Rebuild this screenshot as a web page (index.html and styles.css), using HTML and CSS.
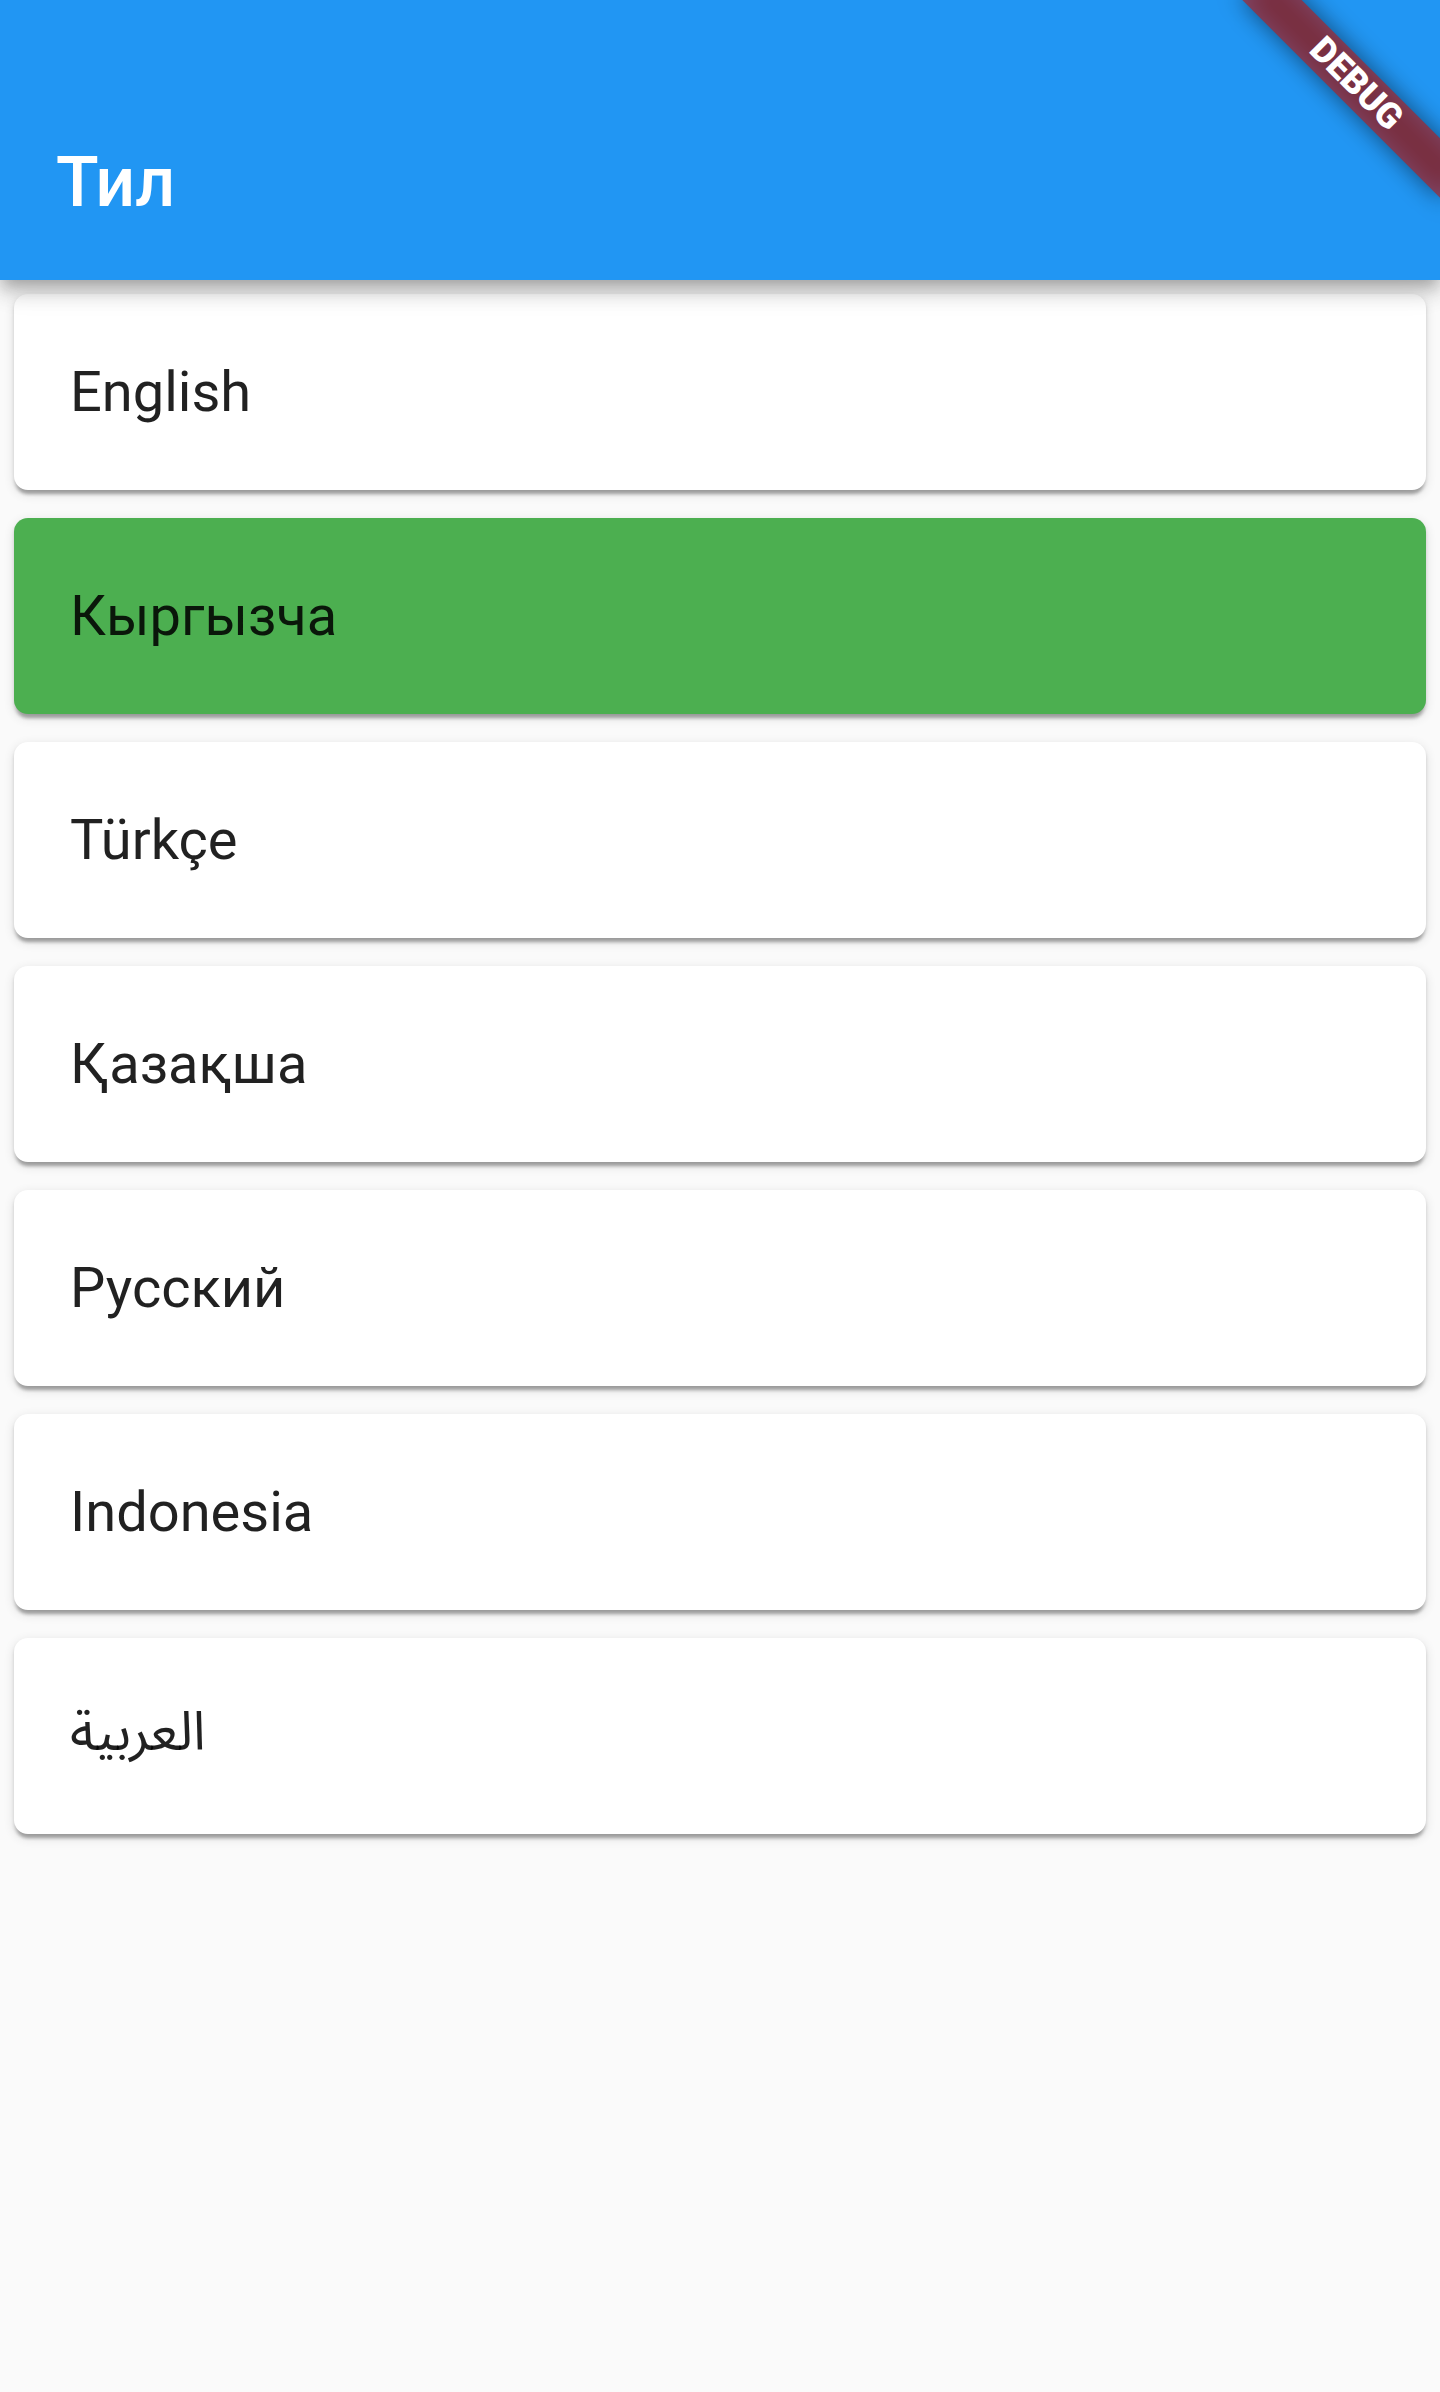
FILE: index.html
```html
<!DOCTYPE html>
<html lang="ky">
<head>
<meta charset="utf-8">
<title>Тил</title>
<link rel="stylesheet" href="styles.css">
</head>
<body>
<div class="screen">
  <header class="appbar">
    <div class="toolbar">
      <h1 class="title">Тил</h1>
    </div>
  </header>
  <main class="list">
    <div class="card"><span class="label">English</span></div>
    <div class="card card-selected"><span class="label">Кыргызча</span></div>
    <div class="card"><span class="label">Türkçe</span></div>
    <div class="card"><span class="label">Қазақша</span></div>
    <div class="card"><span class="label">Русский</span></div>
    <div class="card"><span class="label">Indonesia</span></div>
    <div class="card"><span class="label label-ar">العربية</span></div>
  </main>
  <div class="debug-banner"><span class="debug-text">DEBUG</span></div>
</div>
</body>
</html>
```
FILE: styles.css
```css
html, body {
  margin: 0;
  padding: 0;
}
body {
  background: #fafafa;
  font-family: Roboto, "Noto Sans", "DejaVu Sans", sans-serif;
}
.screen {
  position: relative;
  width: 1440px;
  height: 2392px;
  overflow: hidden;
  background: #fafafa;
}
.appbar {
  position: relative;
  z-index: 2;
  height: 280px;
  background: #2196f3;
  display: flex;
  flex-direction: column;
  justify-content: flex-end;
  box-shadow: 0 7px 14px -3.5px rgba(0,0,0,0.2), 0 14px 17.5px 0 rgba(0,0,0,0.14), 0 3.5px 35px 0 rgba(0,0,0,0.12);
}
.toolbar {
  height: 196px;
  display: flex;
  align-items: center;
  padding-left: 56px;
}
.title {
  margin: 0;
  font-size: 70px;
  font-weight: 500;
  color: #ffffff;
  line-height: normal;
}
.list {
  display: flex;
  flex-direction: column;
  gap: 28px;
  padding: 14px;
}
.card {
  height: 196px;
  background: #ffffff;
  border-radius: 14px;
  display: flex;
  align-items: center;
  padding: 0 56px;
  box-shadow: 0 7px 3.5px -3.5px rgba(0,0,0,0.2), 0 3.5px 3.5px 0 rgba(0,0,0,0.14), 0 3.5px 10.5px 0 rgba(0,0,0,0.12);
}
.card-selected {
  background: #4caf50;
}
.label {
  font-size: 56px;
  font-weight: 400;
  color: rgba(0,0,0,0.87);
  line-height: normal;
}
.label-ar {
  font-family: "Noto Sans Arabic", "Noto Naskh Arabic", "DejaVu Sans", sans-serif;
  font-size: 54px;
  position: relative;
  top: -3px;
}
.debug-banner {
  position: absolute;
  z-index: 5;
  width: 280px;
  height: 42px;
  left: 1216px;
  top: 63px;
  transform: rotate(45deg);
  display: flex;
  align-items: center;
  justify-content: center;
  isolation: isolate;
}
.debug-banner::before {
  content: "";
  position: absolute;
  inset: 0;
  background: rgba(0,0,0,0.5);
  filter: blur(12px);
  z-index: -2;
}
.debug-banner::after {
  content: "";
  position: absolute;
  inset: 0;
  background: rgba(183,28,28,0.627);
  z-index: -1;
}
.debug-text {
  font-family: Roboto, "Liberation Sans", sans-serif;
  font-size: 35.7px;
  font-weight: 900;
  color: #ffffff;
  line-height: 1;
}
```
